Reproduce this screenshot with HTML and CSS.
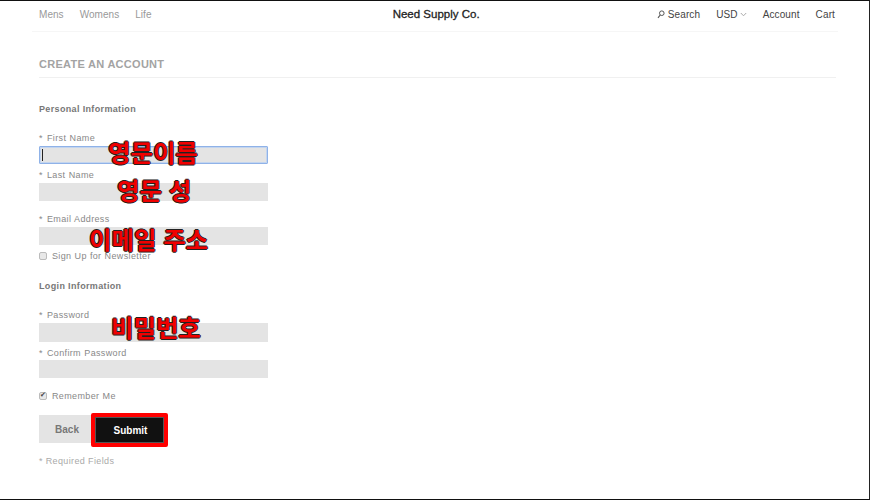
FILE: index.html
```html
<!DOCTYPE html>
<html lang="ko">
<head>
<meta charset="UTF-8">
<title>Create an Account</title>
<link rel="stylesheet" href="styles.css">
</head>
<body>
<div id="page">
	<div class="top">
		<ul class="nav">
			<li>Mens</li>
			<li>Womens</li>
			<li>Life</li>
		</ul>
		<div class="logo">Need Supply Co.</div>
		<ul class="nav right">
			<li class="search"><svg width="8" height="9" viewBox="0 0 8 9"><circle cx="4.8" cy="3.2" r="2.3" fill="none" stroke="#555" stroke-width="1"/><path d="M3.2 5 L1 7.8" stroke="#555" stroke-width="1.1" fill="none"/></svg>Search</li>
			<li class="usd">USD<svg width="7" height="5" viewBox="0 0 7 5"><path d="M.8 1 L3.5 3.8 L6.2 1" stroke="#aaa" fill="none"/></svg></li>
			<li>Account</li>
			<li>Cart</li>
		</ul>
	</div>

	<div class="main">
		<h1>CREATE AN ACCOUNT</h1>

		<h2 class="first">Personal Information</h2>
		<form class="form">
			<label class="lab lab1"><span>*</span>First Name</label>
			<div class="field">
				<input type="text" class="focused">
				<span class="caret"></span>
				<span class="note n1">영문이름</span>
			</div>
			<label class="lab lab2"><span>*</span>Last Name</label>
			<div class="field">
				<input type="text">
				<span class="note n2">영문 성</span>
			</div>
			<label class="lab lab3"><span>*</span>Email Address</label>
			<div class="field">
				<input type="text">
				<span class="note n3">이메일 주소</span>
			</div>
			<label class="check news"><input type="checkbox">Sign Up for Newsletter</label>

			<h2 class="second">Login Information</h2>
			<label class="lab lab4"><span>*</span>Password</label>
			<div class="field">
				<input type="password" class="tall">
				<span class="note n4">비밀번호</span>
			</div>
			<label class="lab lab5"><span>*</span>Confirm Password</label>
			<div class="field">
				<input type="password">
			</div>
			<label class="check remember"><input type="checkbox" checked>Remember Me</label>

			<div class="btns">
				<button type="button" class="back">Back</button>
				<button type="button" class="submit">Submit</button>
			</div>
			<p class="req">* Required Fields</p>
		</form>
	</div>
</div>
</body>
</html>
```

FILE: styles.css
```css
*{ margin:0; padding:0; list-style:none; box-sizing:border-box; }
html,body{ height:100%; background:#fff; }
body{ font-family:"Liberation Sans", Arial, sans-serif; overflow:hidden; }
#page{
	width:870px;
	height:500px;
	border-top:1px solid #111;
	border-right:1px solid #222;
	border-bottom:1px solid #111;
}
.top{
	display:flex;
	justify-content:space-between;
	align-items:center;
	position:relative;
	height:31px;
	margin:0 31px 0 32px;
	padding:0 3px 3px 7px;
	border-bottom:1px solid #f6f6f6;
}
.nav{ display:flex; gap:16px; font-size:10px; letter-spacing:0.05px; color:#999; }
.nav.right{ letter-spacing:0.12px; color:#444; }
.logo{
	font-size:11.5px;
	color:#222;
	-webkit-text-stroke:0.3px #222;
	margin-left:64px;
	padding-bottom:1px;
}
.search svg{ margin-right:3px; vertical-align:-1px; }
.usd svg{ margin-left:2px; vertical-align:1px; }

.main{ margin:0 33px 0 39px; }
h1{
	font-size:11px;
	line-height:14px;
	letter-spacing:0.28px;
	color:#a3a3a3;
	margin-top:25px;
	padding-bottom:6px;
	border-bottom:1px solid #f0f0f0;
}
h2{
	font-size:9px;
	line-height:12px;
	letter-spacing:0.35px;
	color:#777;
}
h2.first{ margin-top:25px; }
h2.second{ margin-top:18px; }

.form{ width:229px; }
.lab{
	display:block;
	font-size:9px;
	line-height:10px;
	letter-spacing:0.35px;
	word-spacing:0.5px;
	color:#888;
}
.lab span{ display:inline-block; width:8px; }
.lab1{ margin-top:18px; margin-bottom:3px; }
.lab2{ margin-top:6px; margin-bottom:3px; }
.lab3{ margin-top:13px; margin-bottom:3px; }
.lab4{ margin-top:18px; margin-bottom:3px; }
.lab5{ margin-top:7px; margin-bottom:2px; }

.field{ position:relative; height:18px; }
.field input{
	display:block;
	width:229px;
	height:18px;
	border:0;
	background:#e4e4e4;
	outline:none;
}
.field input.tall{ height:19px; }
.field input.focused{
	border:1px solid #8fb2e8;
	border-radius:1px;
	box-shadow:inset 0 0 0 1px #c3d5ef;
}
.caret{
	position:absolute;
	left:3px;
	top:3px;
	width:1px;
	height:12px;
	background:#222;
}
.note{
	position:absolute;
	top:50%;
	transform:translateY(-50%);
	font-family:"Noto Sans CJK KR", "Liberation Sans", sans-serif;
	font-size:24.4px;
	font-weight:bold;
	line-height:30px;
	white-space:nowrap;
	color:#f00000;
	text-shadow:-1px 0 0 #222, 1px 0 0 #222, 0 -1px 0 #222, 0 1px 0 #222;
	z-index:2;
}
.n1{ left:69px; top:6px; }
.n2{ left:78px; top:7px; }
.n3{ left:50px; top:12px; }
.n4{ left:72px; top:4px; }

.check{
	display:flex;
	align-items:center;
	font-size:9px;
	line-height:12px;
	letter-spacing:0.37px;
	word-spacing:0.2px;
	color:#888;
}
.check input{
	appearance:none;
	display:block;
	position:relative;
	width:8px;
	height:8px;
	margin-right:5px;
	border:1px solid #bbb;
	border-radius:2px;
	background:#e8e8e8;
}
.check input:checked::after{
	content:"✔";
	position:absolute;
	left:0;
	top:-2px;
	font:7px/9px "DejaVu Sans", sans-serif;
	color:#444;
}
.news{ margin-top:5px; }
.remember{ margin-top:12px; }

.btns{ display:flex; margin-top:11px; align-items:flex-start; }
.back{
	width:54px;
	height:28px;
	margin-top:2px;
	padding:1px 0 0 2px;
	border:0;
	background:#e4e4e4;
	color:#777;
	font:bold 10px "Liberation Sans", Arial, sans-serif;
}
.submit{
	width:77px;
	height:34px;
	margin-left:-2px;
	padding-left:2px;
	border:4px solid #f00;
	border-radius:2px;
	background:#111;
	box-shadow:inset 0 0 0 1px #555;
	color:#fff;
	font:bold 10px "Liberation Sans", Arial, sans-serif;
}
.req{
	margin-top:9px;
	font-size:9px;
	line-height:10px;
	letter-spacing:0.37px;
	color:#aaa;
}
```
